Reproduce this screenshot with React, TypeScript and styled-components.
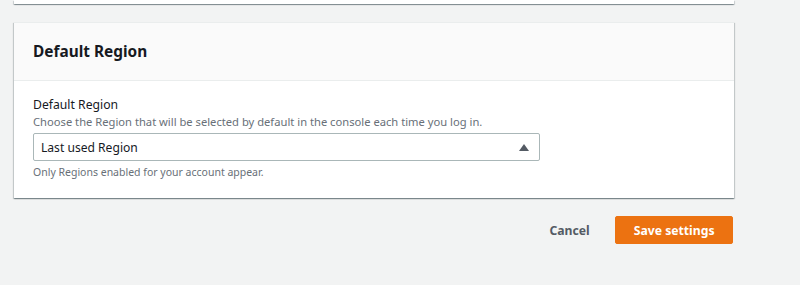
import styled, { createGlobalStyle } from "styled-components";

const GlobalStyle = createGlobalStyle`
	html, body {
		margin: 0;
		padding: 0;
		background: #f2f3f3;
		font-family: "Noto Sans", "Open Sans", Arial, sans-serif;
		overflow: hidden;
	}
	* {
		box-sizing: border-box;
	}
`;

const Page = styled.div`
	width: 800px;
	height: 285px;
	padding: 0 66px 0 14px;
	display: flex;
	flex-direction: column;
`;

const Card = styled.section`
	background: #fff;
	box-shadow: 0 1px 1px 0 rgba(0, 28, 36, 0.3), 1px 1px 1px 0 rgba(0, 28, 36, 0.15),
		-1px 1px 1px 0 rgba(0, 28, 36, 0.15);
	border-top: 1px solid #eaeded;
`;

const CardStub = styled(Card)`
	height: 4px;
	border-top: none;
`;

const RegionCard = styled(Card)`
	margin-top: 18px;
`;

const CardHeader = styled.header`
	height: 58px;
	background: #fafafa;
	border-bottom: 1px solid #eaeded;
	padding: 0 19px;
	display: flex;
	align-items: center;
`;

const Title = styled.h2`
	margin: 0;
	font-size: 15.4px;
	font-weight: 700;
	color: #16191f;
`;

const CardBody = styled.div`
	padding: 15px 19px 18px;
	display: flex;
	flex-direction: column;
`;

const Label = styled.label`
	font-size: 12.2px;
	color: #16191f;
	line-height: 18px;
`;

const Description = styled.div`
	font-size: 11.2px;
	color: #687078;
	line-height: 15px;
	margin-bottom: 4px;
`;

const Select = styled.div`
	width: 507px;
	height: 28px;
	border: 1px solid #aab7b8;
	border-radius: 2px;
	background: #fff;
	display: flex;
	align-items: center;
	justify-content: space-between;
	padding: 0 10px 0 7px;
	font-size: 12.1px;
	color: #16191f;
`;

const Caret = styled.span`
	width: 0;
	height: 0;
	border-left: 5px solid transparent;
	border-right: 5px solid transparent;
	border-bottom: 7px solid #545b64;
`;

const Hint = styled.div`
	font-size: 10.5px;
	color: #687078;
	line-height: 15px;
	margin-top: 4px;
`;

const Actions = styled.div`
	margin-top: 18px;
	display: flex;
	justify-content: flex-end;
	align-items: center;
	gap: 7px;
	padding-right: 1px;
`;

const Button = styled.button<{ $primary?: boolean }>`
	height: 28px;
	padding: 0 17.5px;
	border-radius: 2px;
	font-family: inherit;
	font-size: 12.2px;
	font-weight: 700;
	cursor: pointer;
	border: 1px solid ${(p) => (p.$primary ? "#ec7211" : "transparent")};
	background: ${(p) => (p.$primary ? "#ec7211" : "transparent")};
	color: ${(p) => (p.$primary ? "#fff" : "#545b64")};
`;

export default function App() {
	return (
		<>
			<GlobalStyle />
			<Page>
				<CardStub />
				<RegionCard>
					<CardHeader>
						<Title>Default Region</Title>
					</CardHeader>
					<CardBody>
						<Label>Default Region</Label>
						<Description>
							Choose the Region that will be selected by default in the console each time you log in.
						</Description>
						<Select>
							<span>Last used Region</span>
							<Caret />
						</Select>
						<Hint>Only Regions enabled for your account appear.</Hint>
					</CardBody>
				</RegionCard>
				<Actions>
					<Button>Cancel</Button>
					<Button $primary>Save settings</Button>
				</Actions>
			</Page>
		</>
	);
}
